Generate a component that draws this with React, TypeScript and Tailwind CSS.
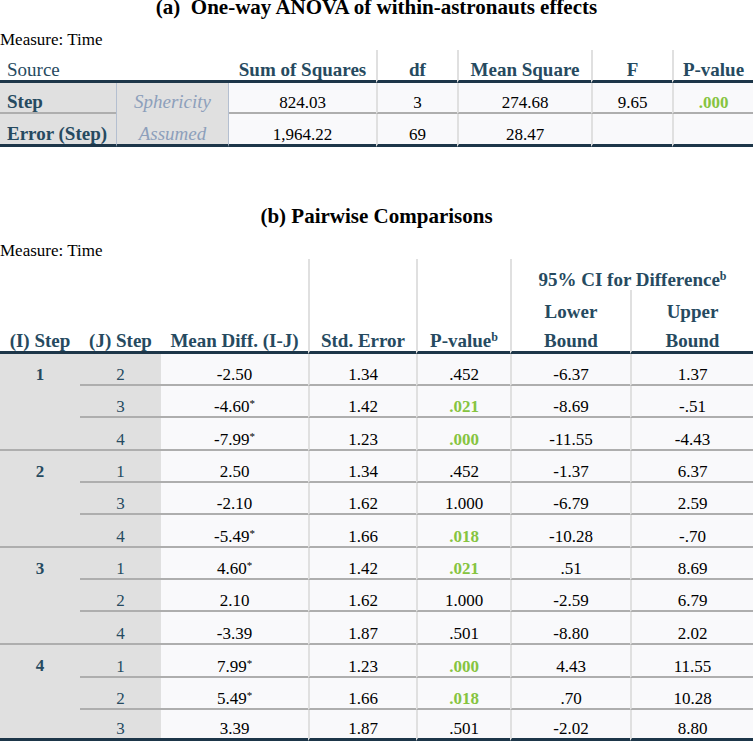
import React from "react";

const HEAD = "text-[#264a60] text-[19px] leading-[21px] font-bold";
const THICK = "border-b-[3px] border-b-[#1d3649]";
const THIN = "border-b-2 border-b-[#aeaeae]";
const VLINE = "border-l-2 border-l-[#e0e0e0]";
const GREEN = "text-[#86c440] font-bold";

type Pair = { j: number; diff: string; sig?: boolean; se: string; p: string; lo: string; hi: string };

const GROUPS: { i: number; rows: Pair[] }[] = [
  {
    i: 1,
    rows: [
      { j: 2, diff: "-2.50", se: "1.34", p: ".452", lo: "-6.37", hi: "1.37" },
      { j: 3, diff: "-4.60", sig: true, se: "1.42", p: ".021", lo: "-8.69", hi: "-.51" },
      { j: 4, diff: "-7.99", sig: true, se: "1.23", p: ".000", lo: "-11.55", hi: "-4.43" },
    ],
  },
  {
    i: 2,
    rows: [
      { j: 1, diff: "2.50", se: "1.34", p: ".452", lo: "-1.37", hi: "6.37" },
      { j: 3, diff: "-2.10", se: "1.62", p: "1.000", lo: "-6.79", hi: "2.59" },
      { j: 4, diff: "-5.49", sig: true, se: "1.66", p: ".018", lo: "-10.28", hi: "-.70" },
    ],
  },
  {
    i: 3,
    rows: [
      { j: 1, diff: "4.60", sig: true, se: "1.42", p: ".021", lo: ".51", hi: "8.69" },
      { j: 2, diff: "2.10", se: "1.62", p: "1.000", lo: "-2.59", hi: "6.79" },
      { j: 4, diff: "-3.39", se: "1.87", p: ".501", lo: "-8.80", hi: "2.02" },
    ],
  },
  {
    i: 4,
    rows: [
      { j: 1, diff: "7.99", sig: true, se: "1.23", p: ".000", lo: "4.43", hi: "11.55" },
      { j: 2, diff: "5.49", sig: true, se: "1.66", p: ".018", lo: ".70", hi: "10.28" },
      { j: 3, diff: "3.39", se: "1.87", p: ".501", lo: "-2.02", hi: "8.80" },
    ],
  },
];

function AnovaTable() {
  const cell = "flex items-end justify-center text-[17px] leading-[19px] bg-[#f9f9fb]";
  return (
    <div className="mt-[2px] grid grid-cols-[116px_113px_147px_81px_134px_81px_81px] grid-rows-[33px_31px_33px]">
      {/* header */}
      <div className={`col-span-2 flex items-end pl-[7px] text-[19px] leading-[21px] text-[#264a60] ${THICK}`}>Source</div>
      <div className={`flex items-end justify-center ${HEAD} ${THICK}`}>Sum of Squares</div>
      <div className={`flex items-end justify-center ${HEAD} ${THICK} ${VLINE}`}>df</div>
      <div className={`flex items-end justify-center ${HEAD} ${THICK} ${VLINE}`}>Mean Square</div>
      <div className={`flex items-end justify-center ${HEAD} ${THICK} ${VLINE}`}>F</div>
      <div className={`flex items-end justify-center ${HEAD} ${THICK} ${VLINE}`}>P-value</div>

      {/* row 1 */}
      <div className={`flex items-end bg-[#e0e0e0] pl-[7px] ${HEAD} ${THIN}`}>Step</div>
      <div className={`row-span-2 flex flex-col bg-[#e0e0e0] border-x border-x-[#b4bfd0] text-[19px] leading-[21px] italic text-[#8d9fbb] ${THICK}`}>
        <div className="flex h-[31px] items-end justify-center pb-[2px]">Sphericity</div>
        <div className="flex h-[30px] items-end justify-center">Assumed</div>
      </div>
      <div className={`${cell} ${THIN}`}>824.03</div>
      <div className={`${cell} ${THIN} ${VLINE}`}>3</div>
      <div className={`${cell} ${THIN} ${VLINE}`}>274.68</div>
      <div className={`${cell} ${THIN} ${VLINE}`}>9.65</div>
      <div className={`${cell} ${THIN} ${VLINE}`}>
        <span className={GREEN}>.000</span>
      </div>

      {/* row 2 */}
      <div className={`flex items-end bg-[#e0e0e0] pl-[7px] ${HEAD} ${THICK}`}>Error (Step)</div>
      <div className={`${cell} ${THICK}`}>1,964.22</div>
      <div className={`${cell} ${THICK} ${VLINE}`}>69</div>
      <div className={`${cell} ${THICK} ${VLINE}`}>28.47</div>
      <div className={`${cell} ${THICK} ${VLINE}`}></div>
      <div className={`${cell} ${THICK} ${VLINE}`}></div>
    </div>
  );
}

function PairHeader() {
  const h = `flex items-end justify-center ${HEAD}`;
  return (
    <div className="grid grid-cols-[80px_81px_147px_108px_94px_120px_123px] grid-rows-[31px_32px_32px]">
      <div className={`col-start-1 row-start-1 row-span-3 ${h} ${THICK}`}>(I) Step</div>
      <div className={`col-start-2 row-start-1 row-span-3 ${h} ${THICK}`}>(J) Step</div>
      <div className={`col-start-3 row-start-1 row-span-3 ${h} ${THICK}`}>Mean Diff. (I-J)</div>
      <div className={`col-start-4 row-start-1 row-span-3 ${h} ${THICK} ${VLINE}`}>Std. Error</div>
      <div className={`col-start-5 row-start-1 row-span-3 ${h} ${THICK} ${VLINE}`}>
        <span>
          P-value<sup className="text-[12px] leading-none">b</sup>
        </span>
      </div>
      <div className={`col-start-6 col-span-2 row-start-1 ${h} ${VLINE}`}>
        <span>
          95% CI for Difference<sup className="text-[12px] leading-none">b</sup>
        </span>
      </div>
      <div className={`col-start-6 row-start-2 ${h} ${VLINE}`}>Lower</div>
      <div className={`col-start-7 row-start-2 ${h} ${VLINE}`}>Upper</div>
      <div className={`col-start-6 row-start-3 ${h} ${THICK} ${VLINE}`}>Bound</div>
      <div className={`col-start-7 row-start-3 ${h} ${THICK} ${VLINE}`}>Bound</div>
    </div>
  );
}

function PairGroup({ i, rows, last }: { i: number; rows: Pair[]; last: boolean }) {
  const sep = (k: number) => (last && k === rows.length - 1 ? THICK : THIN);
  const data = "flex items-end justify-center bg-[#f9f9fb] text-[17px] leading-[19px]";
  return (
    <div
      className={`grid grid-cols-[80px_81px_147px_108px_94px_120px_123px] ${
        last ? "grid-rows-[33px_32px_31px]" : "grid-rows-[32px_32px_33px]"
      }`}
    >
      <div className={`row-span-3 bg-[#e0e0e0] ${last ? THICK : THIN}`}>
        <div className="flex h-[30px] items-end justify-center text-[17px] leading-[19px] font-bold text-[#264a60]">{i}</div>
      </div>
      {rows.map((r, k) => (
        <React.Fragment key={k}>
          <div className={`flex items-end justify-center bg-[#e0e0e0] text-[17px] leading-[19px] text-[#264a60] ${sep(k)}`}>
            {r.j}
          </div>
          <div className={`${data} ${sep(k)}`}>
            <span>
              {r.diff}
              {r.sig && <sup className="text-[11px] leading-none">*</sup>}
            </span>
          </div>
          <div className={`${data} ${sep(k)} ${VLINE}`}>{r.se}</div>
          <div className={`${data} ${sep(k)} ${VLINE}`}>
            <span className={r.p.startsWith(".") && parseFloat(r.p) < 0.05 ? GREEN : ""}>{r.p}</span>
          </div>
          <div className={`${data} ${sep(k)} ${VLINE}`}>{r.lo}</div>
          <div className={`${data} ${sep(k)} ${VLINE}`}>{r.hi}</div>
        </React.Fragment>
      ))}
    </div>
  );
}

export default function App() {
  return (
    <div className="w-[753px] bg-white font-['Liberation_Serif',serif] text-black">
      <h2 className="h-[15px] text-center text-[21px] font-bold leading-[15px]">
        (a)&nbsp; One-way ANOVA of within-astronauts effects
      </h2>
      <p className="mt-[16px] h-[17px] text-[17px] leading-[17px]">Measure: Time</p>
      <AnovaTable />

      <h2 className="mt-[62px] h-[15px] text-center text-[21px] font-bold leading-[15px]">
        (b) Pairwise Comparisons
      </h2>
      <p className="mt-[18px] h-[17px] text-[17px] leading-[17px]">Measure: Time</p>
      <PairHeader />
      {GROUPS.map((g, idx) => (
        <PairGroup key={g.i} i={g.i} rows={g.rows} last={idx === GROUPS.length - 1} />
      ))}
    </div>
  );
}
